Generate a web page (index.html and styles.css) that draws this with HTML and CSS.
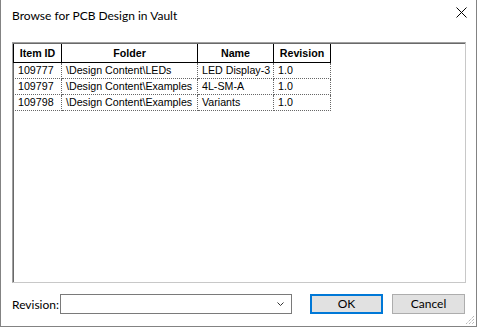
FILE: index.html
```html
<html>
  <head>
    <link rel="stylesheet" href="styles.css">
  </head>
  <body>
    <div class='dialog'>
      <div class='titleBar'>
        <span class='title'>Browse for PCB Design in Vault</span>
        <svg class='closeIcon' width='11' height='11' viewBox='0 0 11 11'>
          <path d='M0.5 0.5 L10.5 10.5 M10.5 0.5 L0.5 10.5' stroke='#000' stroke-width='1' fill='none'/>
        </svg>
      </div>
      <div class='listBox'>
        <table class='itemTable'>
          <thead>
            <tr>
              <th class='colId'>Item ID</th>
              <th class='colFolder'>Folder</th>
              <th class='colName'>Name</th>
              <th class='colRev'>Revision</th>
            </tr>
          </thead>
          <tbody>
            <tr>
              <td>109777</td>
              <td>\Design Content\LEDs</td>
              <td>LED Display-3</td>
              <td>1.0</td>
            </tr>
            <tr>
              <td>109797</td>
              <td>\Design Content\Examples</td>
              <td>4L-SM-A</td>
              <td>1.0</td>
            </tr>
            <tr>
              <td>109798</td>
              <td>\Design Content\Examples</td>
              <td>Variants</td>
              <td>1.0</td>
            </tr>
          </tbody>
        </table>
      </div>
      <div class='footer'>
        <span class='revLabel'>Revision:</span>
        <div class='combo'>
          <svg class='chevron' width='7' height='4' viewBox='0 0 7 4'>
            <path d='M0.5 0.5 L3.5 3.5 L6.5 0.5' stroke='#333' stroke-width='1' fill='none'/>
          </svg>
        </div>
        <div class='btn btnDefault'>OK</div>
        <div class='btn'>Cancel</div>
      </div>
      <svg class='grip' width='10' height='10' viewBox='0 0 10 10'>
        <path d='M9 1 L1 9 M9 4 L4 9 M9 7 L7 9' stroke='#999' stroke-width='1' stroke-dasharray='1 1' fill='none'/>
      </svg>
    </div>
  </body>
</html>
```
FILE: styles.css
```css
body{
  margin: 0;
  width: 478px;
  height: 328px;
  background-color: #fff;
}
.dialog{
  position: relative;
  box-sizing: border-box;
  width: 477px;
  height: 327px;
  border-left: 1px solid #838383;
  border-right: 1px solid #838383;
  border-bottom: 1px solid #838383;
  background-color: #fff;
  display: flex;
  flex-direction: column;
}
.titleBar{
  height: 42px;
  display: flex;
  justify-content: space-between;
  align-items: flex-start;
  padding: 0 9px 0 11px;
  box-sizing: border-box;
}
.title{
  font-family: Lato, sans-serif;
  font-size: 12px;
  line-height: 16px;
  margin-top: 8px;
  color: #000;
}
.closeIcon{
  margin-top: 7px;
}
.listBox{
  box-sizing: border-box;
  margin-left: 11px;
  width: 454px;
  height: 241px;
  border-top: 1px solid #a0a0a0;
  border-left: 1px solid #a0a0a0;
  border-right: 1px solid #c8c8c8;
  border-bottom: 1px solid #c8c8c8;
  box-shadow: inset 1px 1px 0 #696969;
  padding: 1px 0 0 0;
  background-color: #fff;
}
.itemTable{
  border-collapse: collapse;
  font-family: "Liberation Sans", Arial, sans-serif;
  font-size: 8pt;
  color: #000;
}
.itemTable th{
  height: 18px;
  padding: 0 3px;
  border: 1px solid #000;
  border-top: none;
  font-weight: bold;
  text-align: center;
  line-height: 18px;
}
.itemTable td{
  height: 15px;
  padding: 0 2px 0 4px;
  border: 1px dotted #666;
  line-height: 15px;
  white-space: nowrap;
}
.colId{ width: 41px; }
.colFolder{ width: 129px; }
.colName{ width: 69px; }
.colRev{ width: 50px; }
.footer{
  display: flex;
  align-items: center;
  margin: 11px 0 0 11px;
  height: 20px;
}
.revLabel{
  font-family: Lato, sans-serif;
  font-size: 12px;
  width: 48px;
  white-space: nowrap;
  color: #000;
}
.combo{
  box-sizing: border-box;
  width: 232px;
  height: 20px;
  border: 1px solid #7a7a7a;
  background-color: #fff;
  display: flex;
  align-items: center;
  justify-content: flex-end;
  padding-right: 7px;
}
.btn{
  box-sizing: border-box;
  width: 73px;
  height: 20px;
  border: 1px solid #adadad;
  background-color: #e1e1e1;
  font-family: Lato, sans-serif;
  font-size: 12px;
  line-height: 18px;
  text-align: center;
  margin-left: 9px;
}
.btnDefault{
  margin-left: 18px;
  border: 2px solid #0078d7;
  line-height: 16px;
}
.grip{
  position: absolute;
  right: 1px;
  bottom: 1px;
}
```
